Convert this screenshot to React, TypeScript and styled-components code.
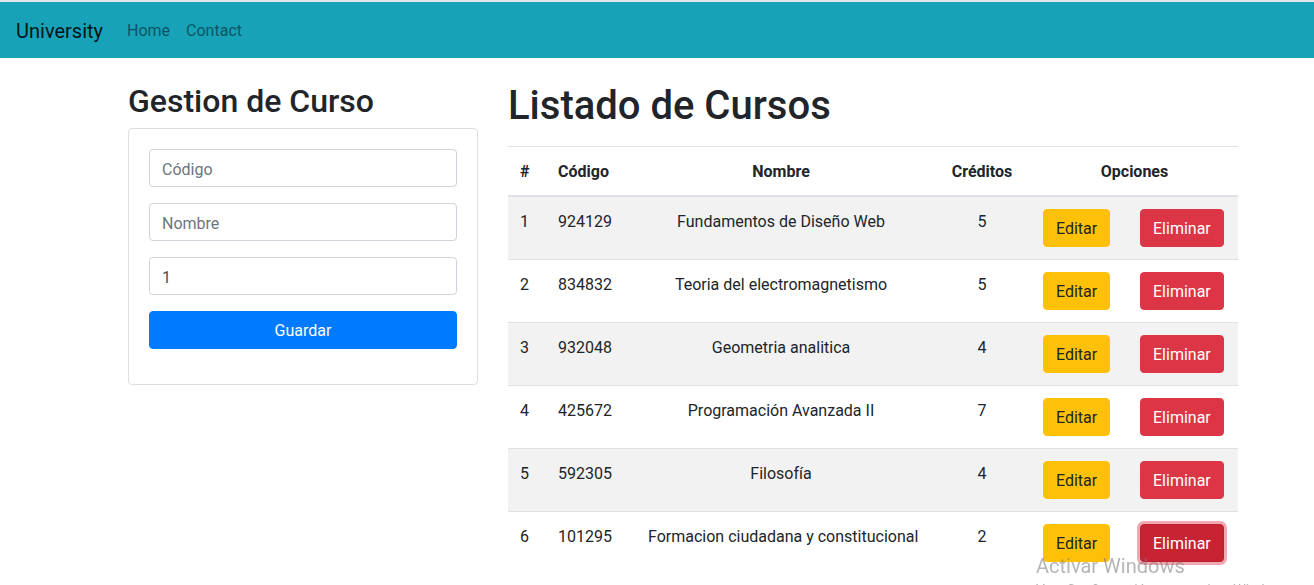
import React from "react";
import styled, { createGlobalStyle } from "styled-components";

const Global = createGlobalStyle`
  html, body { margin: 0; padding: 0; background: #fff; }
  body {
    font-family: Roboto, "Liberation Sans", Arial, sans-serif;
    font-size: 16px;
    line-height: 1.5;
    color: #212529;
    overflow: hidden;
    border-top: 2px solid #e3e6e8;
  }
  * { box-sizing: border-box; }
`;

const Navbar = styled.nav`
  height: 56px;
  background: #17a2b8;
  display: flex;
  align-items: center;
  padding: 2px 16px 0;
`;

const Brand = styled.a`
  font-size: 20px;
  color: rgba(0, 0, 0, 0.9);
  margin-right: 16px;
  padding: 5px 0;
  text-decoration: none;
`;

const NavLink = styled.a`
  color: rgba(0, 0, 0, 0.5);
  padding: 8px;
  text-decoration: none;
`;

const Container = styled.div`
  width: 1140px;
  margin-left: 113px;
  padding: 0 15px;
  margin-top: 24px;
`;

const Row = styled.div`
  display: flex;
  margin: 0 -15px;
`;

const Col = styled.div<{ $w: number }>`
  width: ${(p) => p.$w}px;
  padding: 0 15px;
`;

const H2 = styled.h2`
  font-size: 32px;
  font-weight: 500;
  line-height: 1.2;
  margin: 0 0 8px;
`;

const H1 = styled.h1`
  font-size: 40px;
  font-weight: 500;
  line-height: 1.2;
  margin: 0 0 16px;
`;

const Card = styled.div`
  border: 1px solid rgba(0, 0, 0, 0.125);
  border-radius: 4px;
  padding: 20px 20px 35px;
  display: flex;
  flex-direction: column;
  gap: 16px;
`;

const Input = styled.input`
  display: block;
  width: 100%;
  height: 38px;
  padding: 7px 12px 5px;
  font-size: 16px;
  font-family: inherit;
  color: #495057;
  border: 1px solid #ced4da;
  border-radius: 4px;
  outline: none;
  &::placeholder { color: #6c757d; }
`;

const Btn = styled.button<{ $v: "primary" | "warning" | "danger"; $focus?: boolean }>`
  display: inline-block;
  height: 38px;
  padding: 7px 12px 5px;
  font-size: 16px;
  font-family: inherit;
  line-height: 1.5;
  border-radius: 4px;
  border: 1px solid;
  cursor: pointer;
  ${(p) =>
    p.$v === "primary"
      ? "background:#007bff;border-color:#007bff;color:#fff;width:100%;"
      : p.$v === "warning"
      ? "background:#ffc107;border-color:#ffc107;color:#212529;"
      : p.$focus
      ? "background:#c82333;border-color:#bd2130;color:#fff;box-shadow:0 0 0 3px rgba(225,83,97,.5);"
      : "background:#dc3545;border-color:#dc3545;color:#fff;"}
`;

const Table = styled.table`
  width: 100%;
  border-collapse: collapse;
  table-layout: fixed;
`;

const Th = styled.th<{ $center?: boolean; $pl?: number }>`
  padding: 13px 12px 11px ${(p) => p.$pl ?? 12}px;
  font-weight: 700;
  text-align: ${(p) => (p.$center ? "center" : "left")};
  vertical-align: bottom;
  border-top: 1px solid #dee2e6;
  border-bottom: 2px solid #dee2e6;
`;

const Tr = styled.tr<{ $odd: boolean }>`
  background: ${(p) => (p.$odd ? "rgba(0,0,0,0.05)" : "transparent")};
`;

const Td = styled.td<{ $center?: boolean; $pl?: number; $btn?: boolean }>`
  padding: ${(p) => (p.$btn ? "12px" : "13px 12px 11px")};
  padding-left: ${(p) => p.$pl ?? 12}px;
  vertical-align: top;
  text-align: ${(p) => (p.$center ? "center" : "left")};
  border-top: 1px solid #dee2e6;
  white-space: nowrap;
`;

const Watermark = styled.div`
  position: fixed;
  left: 1036px;
  top: 553px;
  color: rgba(120, 120, 120, 0.55);
  font-size: 20px;
  line-height: 26px;
  white-space: nowrap;
  pointer-events: none;
`;

const WatermarkSub = styled.span`
  display: block;
  font-size: 14px;
  line-height: 20px;
  margin-top: 1px;
`;

const cursos = [
  ["924129", "Fundamentos de Diseño Web", "5"],
  ["834832", "Teoria del electromagnetismo", "5"],
  ["932048", "Geometria analitica", "4"],
  ["425672", "Programación Avanzada II", "7"],
  ["592305", "Filosofía", "4"],
  ["101295", "Formacion ciudadana y constitucional", "2"],
];

export default function App() {
  return (
    <>
      <Global />
      <Navbar>
        <Brand href="#">University</Brand>
        <NavLink href="#">Home</NavLink>
        <NavLink href="#">Contact</NavLink>
      </Navbar>
      <Container>
        <Row>
          <Col $w={380}>
            <H2>Gestion de Curso</H2>
            <Card>
              <Input placeholder="Código" />
              <Input placeholder="Nombre" />
              <Input defaultValue="1" />
              <Btn $v="primary">Guardar</Btn>
            </Card>
          </Col>
          <Col $w={760}>
            <H1>Listado de Cursos</H1>
            <Table>
              <colgroup>
                <col style={{ width: 38 }} />
                <col style={{ width: 90 }} />
                <col style={{ width: 290 }} />
                <col style={{ width: 105 }} />
                <col style={{ width: 97 }} />
                <col style={{ width: 110 }} />
              </colgroup>
              <thead>
                <tr>
                  <Th>#</Th>
                  <Th>Código</Th>
                  <Th $center>Nombre</Th>
                  <Th $center $pl={19}>Créditos</Th>
                  <Th $center colSpan={2}>Opciones</Th>
                </tr>
              </thead>
              <tbody>
                {cursos.map((c, i) => (
                  <Tr key={i} $odd={i % 2 === 0}>
                    <Td>{i + 1}</Td>
                    <Td>{c[0]}</Td>
                    <Td $center>{c[1]}</Td>
                    <Td $center $pl={19}>{c[2]}</Td>
                    <Td $btn>
                      <Btn $v="warning">Editar</Btn>
                    </Td>
                    <Td $btn>
                      <Btn $v="danger" $focus={i === 5}>Eliminar</Btn>
                    </Td>
                  </Tr>
                ))}
              </tbody>
            </Table>
          </Col>
        </Row>
      </Container>
      <Watermark>
        Activar Windows
        <WatermarkSub>Ve a Configuración para activar Windows.</WatermarkSub>
      </Watermark>
    </>
  );
}
